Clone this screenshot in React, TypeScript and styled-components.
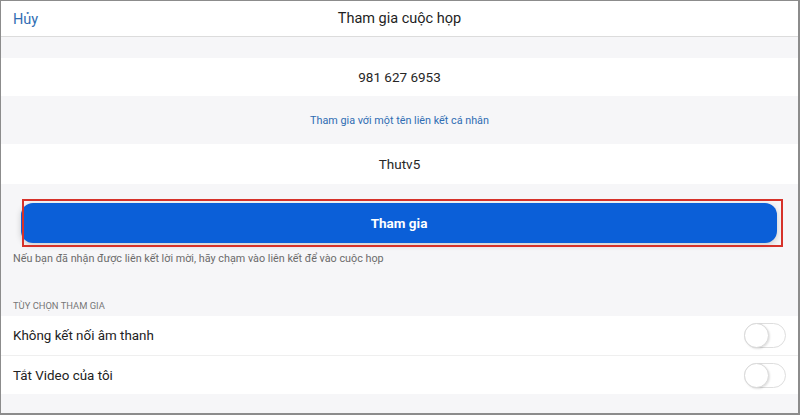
import React from "react";
import styled, { createGlobalStyle } from "styled-components";

const Global = createGlobalStyle`
  html, body { margin: 0; padding: 0; background: #f6f6f8; }
  body { font-family: Roboto, "Noto Sans", "Liberation Sans", sans-serif; }
  * { box-sizing: border-box; }
`;

const Frame = styled.div`
  position: relative;
  width: 800px;
  height: 415px;
  overflow: hidden;
  display: flex;
  flex-direction: column;
  background: #f6f6f8;
  border-style: solid;
  border-color: #8c8c8c;
  border-width: 1px 2px 2px 1px;
`;

const Header = styled.header`
  position: relative;
  height: 36px;
  flex: none;
  display: flex;
  align-items: center;
  justify-content: center;
  background: #ffffff;
  border-bottom: 1px solid #dcdcdc;
`;

const Cancel = styled.span`
  position: absolute;
  left: 12px;
  top: 50%;
  transform: translateY(-50%);
  font-size: 14.5px;
  color: #2f6db3;
`;

const Title = styled.h1`
  margin: 0;
  font-size: 14.5px;
  font-weight: 400;
  color: #1e1e1e;
`;

const Spacer = styled.div<{ h: number }>`
  height: ${(p) => p.h}px;
  flex: none;
`;

const FieldRow = styled.div<{ h: number }>`
  height: ${(p) => p.h}px;
  flex: none;
  display: flex;
  align-items: center;
  justify-content: center;
  background: #ffffff;
  font-size: 13.5px;
  color: #262626;
`;

const LinkRow = styled.div`
  height: 48px;
  flex: none;
  display: flex;
  align-items: center;
  justify-content: center;
  font-size: 10.8px;
  color: #2f6db3;
`;

const ButtonWrap = styled.div`
  padding: 19px 21px 0 20px;
  flex: none;
`;

const JoinButton = styled.button`
  width: 100%;
  height: 40px;
  border: none;
  border-radius: 12px;
  background: #0b5fd8;
  color: #ffffff;
  font-family: inherit;
  font-size: 13.5px;
  font-weight: 700;
  box-shadow: 0 2px 6px rgba(0, 0, 0, 0.18);
`;

const Highlight = styled.div`
  position: absolute;
  left: 21px;
  top: 198px;
  width: 761px;
  height: 48px;
  border: 2px solid #d6322a;
  pointer-events: none;
`;

const Hint = styled.p`
  margin: 8px 0 0 12px;
  line-height: 16px;
  font-size: 10.8px;
  color: #6b6b6b;
`;

const SectionLabel = styled.div`
  margin: 32px 0 0 12px;
  line-height: 14px;
  padding-bottom: 3px;
  font-size: 9.4px;
  color: #777777;
  text-transform: uppercase;
`;

const OptionList = styled.div`
  background: #ffffff;
  flex: none;
`;

const OptionRow = styled.div<{ h: number; divider?: boolean }>`
  height: ${(p) => p.h}px;
  display: flex;
  align-items: center;
  justify-content: space-between;
  padding: 0 12px 0 12px;
  border-bottom: ${(p) => (p.divider ? "1px solid #efefef" : "none")};
  font-size: 13.4px;
  color: #222222;
`;

const Toggle = styled.div`
  position: relative;
  width: 42px;
  height: 25px;
  border-radius: 13px;
  border: 1px solid #dedede;
  background: #ffffff;
`;

const Knob = styled.div`
  position: absolute;
  left: -1px;
  top: -1px;
  width: 25px;
  height: 25px;
  border-radius: 50%;
  background: #ffffff;
  border: 1px solid #d9d9d9;
  box-shadow: 1px 1px 2px rgba(0, 0, 0, 0.12);
`;

export default function App() {
  return (
    <>
      <Global />
      <Frame>
        <Header>
          <Cancel>Hủy</Cancel>
          <Title>Tham gia cuộc họp</Title>
        </Header>
        <Spacer h={21} />
        <FieldRow h={38}>981 627 6953</FieldRow>
        <LinkRow>Tham gia với một tên liên kết cá nhân</LinkRow>
        <FieldRow h={40}>Thutv5</FieldRow>
        <ButtonWrap>
          <JoinButton>Tham gia</JoinButton>
        </ButtonWrap>
        <Hint>Nếu bạn đã nhận được liên kết lời mời, hãy chạm vào liên kết để vào cuộc họp</Hint>
        <SectionLabel>Tùy chọn tham gia</SectionLabel>
        <OptionList>
          <OptionRow h={40} divider>
            Không kết nối âm thanh
            <Toggle>
              <Knob />
            </Toggle>
          </OptionRow>
          <OptionRow h={38}>
            Tắt Video của tôi
            <Toggle>
              <Knob />
            </Toggle>
          </OptionRow>
        </OptionList>
        <Highlight />
      </Frame>
    </>
  );
}
